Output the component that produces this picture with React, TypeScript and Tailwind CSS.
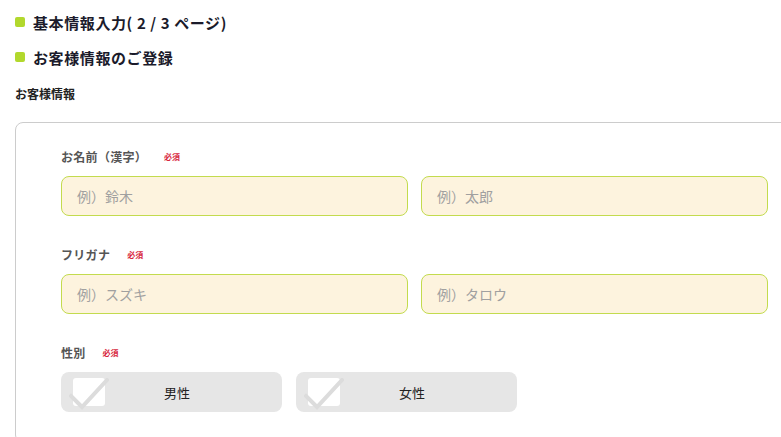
import React from "react";

const font = { fontFamily: '"Noto Sans CJK JP", "Noto Sans", sans-serif' };

function Heading({ children }: { children: React.ReactNode }) {
  return (
    <div className="flex items-center gap-[8px] h-[24px]">
      <span className="w-[10px] h-[10px] rounded-[2px] bg-[#b2d82d] shrink-0" />
      <span className="text-[15px] font-bold text-[#1b1b2b] leading-none tracking-[0.6px]">{children}</span>
    </div>
  );
}

function Label({ text }: { text: string }) {
  return (
    <div className="flex items-center gap-[17px] h-[16px]">
      <span className="text-[12px] font-bold text-[#555] leading-none tracking-[0.3px]">{text}</span>
      <span className="text-[8px] font-bold text-[#d7263d] leading-none">必須</span>
    </div>
  );
}

function Input({ placeholder }: { placeholder: string }) {
  return (
    <div className="flex-1 h-[40px] rounded-[8px] border border-[#c3db4e] bg-[#fdf3de] flex items-center px-[15px]">
      <span className="text-[14px] text-[#a0a0a0] leading-none">{placeholder}</span>
    </div>
  );
}

function Check() {
  return (
    <div className="relative w-[32px] h-[28px] bg-white rounded-[3px] shrink-0">
      <svg className="absolute left-[-4px] top-[0px]" width="40" height="34" viewBox="0 0 40 34">
        <path d="M2 18 L13 29 L38 2" fill="none" stroke="#dcdcdc" strokeWidth="4" strokeLinecap="square" />
      </svg>
    </div>
  );
}

function Choice({ text }: { text: string }) {
  return (
    <div className="relative w-[221px] h-[40px] rounded-[8px] bg-[#e6e6e6] flex items-center pl-[12px]">
      <Check />
      <span className="absolute inset-0 pl-[11px] flex items-center justify-center text-[13px] text-[#222] leading-none">{text}</span>
    </div>
  );
}

export default function App() {
  return (
    <div className="w-[781px] h-[437px] overflow-hidden bg-white" style={font}>
      <div className="pl-[15px] pt-[10px]">
        <Heading>基本情報入力( 2 / 3 ページ)</Heading>
        <div className="h-[11px]" />
        <Heading>お客様情報のご登録</Heading>
        <div className="mt-[19px] text-[12px] font-bold text-[#222] leading-none h-[14px]">お客様情報</div>
        <div className="mt-[20px] w-[799px] rounded-[8px] border border-[#cccccc] px-[45px] pt-[26px] pb-[30px]">
          <Label text="お名前（漢字）" />
          <div className="flex gap-[13px] mt-[11px]">
            <Input placeholder="例）鈴木" />
            <Input placeholder="例）太郎" />
          </div>
          <div className="mt-[31px]">
            <Label text="フリガナ" />
          </div>
          <div className="flex gap-[13px] mt-[11px]">
            <Input placeholder="例）スズキ" />
            <Input placeholder="例）タロウ" />
          </div>
          <div className="mt-[31px]">
            <Label text="性別" />
          </div>
          <div className="flex gap-[14px] mt-[11px]">
            <Choice text="男性" />
            <Choice text="女性" />
          </div>
        </div>
      </div>
    </div>
  );
}
